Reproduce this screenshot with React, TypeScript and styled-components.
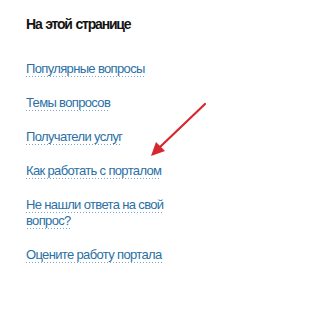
import React from 'react';
import styled, {createGlobalStyle} from 'styled-components';

const links = [
    'Популярные вопросы',
    'Темы вопросов',
    'Получатели услуг',
    'Как работать с порталом',
    'Не нашли ответа на свой вопрос?',
    'Оцените работу портала',
];

const App = () => {
    return (
        <Page>
            <GlobalStyle />
            <Sidebar>
                <Title>На этой странице</Title>
                <LinkList>
                    {links.map((text) => (
                        <LinkItem key={text}>
                            <Link href="#">{text}</Link>
                        </LinkItem>
                    ))}
                </LinkList>
            </Sidebar>
            <Arrow viewBox="0 0 221 320" width="221" height="320">
                <line x1="205" y1="104" x2="160" y2="147" stroke="#d8262e" strokeWidth="2.2" strokeLinecap="round" />
                <polygon points="151,156 156,142 165,151" fill="#d8262e" />
            </Arrow>
        </Page>
    );
};

const GlobalStyle = createGlobalStyle`
    html, body {
        margin: 0;
        padding: 0;
        background: #ffffff;
    }
`;

const Page = styled.div`
    position: relative;
    width: 221px;
    height: 320px;
    overflow: hidden;
    font-family: "Liberation Sans", Arial, sans-serif;
`;

const Sidebar = styled.nav`
    padding: 14px 0 0 26px;
    width: 150px;
`;

const Title = styled.h2`
    margin: 0;
    font-size: 14px;
    line-height: 20px;
    font-weight: bold;
    letter-spacing: -1.2px;
    word-spacing: 1px;
    color: #141414;
`;

const LinkList = styled.ul`
    list-style: none;
    margin: 27px 0 0;
    padding: 0;
    display: flex;
    flex-direction: column;
    gap: 18px;
`;

const LinkItem = styled.li`
    font-size: 13px;
    line-height: 16px;
    letter-spacing: -0.65px;
`;

const Link = styled.a`
    color: #2a70a6;
    text-decoration: none;
    padding-bottom: 1px;
    background-image: linear-gradient(to right, #7ea6c6 50%, transparent 50%);
    background-size: 3px 1px;
    background-repeat: repeat-x;
    background-position: 0 100%;
`;

const Arrow = styled.svg`
    position: absolute;
    top: 0;
    left: 0;
    pointer-events: none;
`;

export default App;
